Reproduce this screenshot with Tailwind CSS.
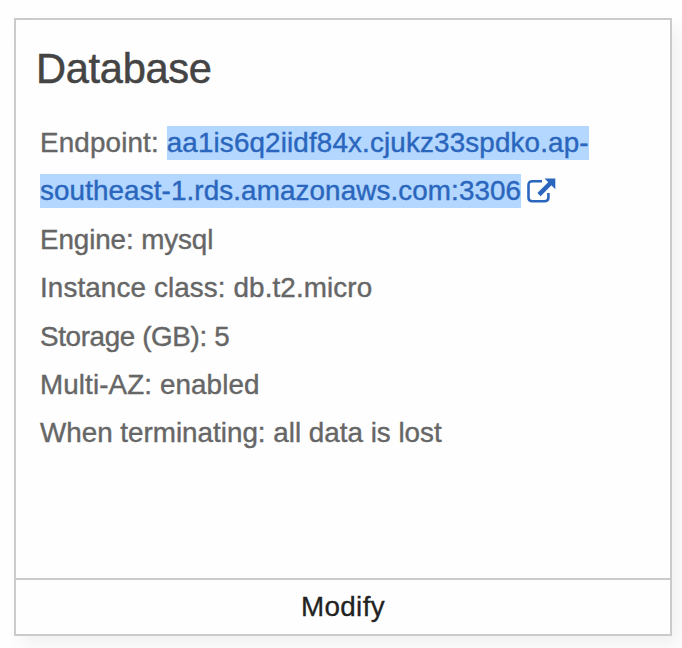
<!DOCTYPE html>
<html lang="en">
<head>
<meta charset="utf-8">
<title>Database</title>
<script src="https://cdn.jsdelivr.net/npm/@tailwindcss/browser@4"></script>
</head>
<body class="h-[648px] overflow-hidden bg-[#fefefe] pt-[18px] pl-[14px] font-['Liberation_Sans',Arial,sans-serif]">
<section class="flex h-[618px] w-[658px] flex-col border-[2.5px] border-[#cbcbcb] bg-[#fefefe] shadow-[8px_10px_16px_rgba(0,0,0,0.05)]">
  <div class="flex-1 pt-[25px] pl-[20px]">
    <h2 class="text-[41.6px] leading-[48px] tracking-[-0.3px] text-[#444] [-webkit-text-stroke:0.5px_#444]">Database</h2>
    <div class="mt-[26px] pl-[4px] text-[27.8px] leading-[48.4px] text-[#666] [-webkit-text-stroke:0.4px_currentColor]">
      <p class="tracking-[0.15px]">Endpoint: <a class="text-[#2a66bd]"><span class="bg-[#b3d7fe] box-decoration-clone pt-px pb-[2px]">aa1is6q2iidf84x.cjukz33spdko.ap-<br><span class="tracking-[0.11px]">southeast-1.rds.amazonaws.com:3306</span></span><svg class="ml-[5px] inline-block align-[-4px]" width="30" height="28" viewBox="0 0 30 28" fill="none"><path d="M16 5.2H6.500Q2.500 5.200 2.500 9.200V21.500Q2.500 25.200 6.500 25.200H18.500Q22.400 25.200 22.400 21.500V17" stroke="currentColor" stroke-width="2.600"/><path d="M13 18.700L25.500 6" stroke="currentColor" stroke-width="4.600"/><path d="M18.500 2.500H29.300V13.300Z" fill="currentColor"/></svg></a></p>
      <p class="tracking-[-0.1px]">Engine: mysql</p>
      <p class="tracking-[0.12px]">Instance class: db.t2.micro</p>
      <p class="tracking-[-0.36px]">Storage (GB): 5</p>
      <p class="tracking-[0.1px]">Multi-AZ: enabled</p>
      <p>When terminating: all data is lost</p>
    </div>
  </div>
  <button class="h-[56px] border-t-2 border-[#cbcbcb] text-[27.8px] leading-[52px] tracking-[0.35px] text-[#222] [-webkit-text-stroke:0.3px_#222]">Modify</button>
</section>
</body>
</html>
